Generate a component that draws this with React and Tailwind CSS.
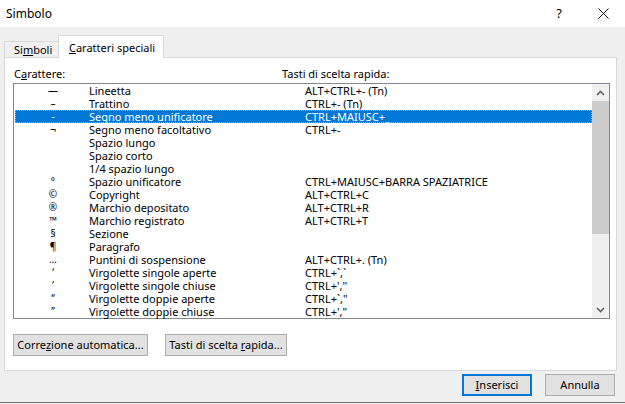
import React from "react";

const rows = [
  ["—", "Lineetta", "ALT+CTRL+- (Tn)"],
  ["–", "Trattino", "CTRL+- (Tn)"],
  ["-", "Segno meno unificatore", "CTRL+MAIUSC+_", true],
  ["¬", "Segno meno facoltativo", "CTRL+-"],
  ["", "Spazio lungo", ""],
  ["", "Spazio corto", ""],
  ["", "1/4  spazio lungo", ""],
  ["°", "Spazio unificatore", "CTRL+MAIUSC+BARRA SPAZIATRICE"],
  ["©", "Copyright", "ALT+CTRL+C"],
  ["®", "Marchio depositato", "ALT+CTRL+R"],
  ["™", "Marchio registrato", "ALT+CTRL+T"],
  ["§", "Sezione", ""],
  ["¶", "Paragrafo", ""],
  ["…", "Puntini di sospensione", "ALT+CTRL+. (Tn)"],
  ["‘", "Virgolette singole aperte", "CTRL+`,`"],
  ["’", "Virgolette singole chiuse", "CTRL+',''"],
  ["“", "Virgolette doppie aperte", "CTRL+`,\""],
  ["”", "Virgolette doppie chiuse", "CTRL+',\""],
];

function Btn({ children, className = "" }) {
  return (
    <div
      className={
        "h-[22px] flex items-center justify-center bg-[#e1e1e1] border border-[#adadad] text-[11px] text-black " +
        className
      }
    >
      <span className="whitespace-nowrap">{children}</span>
    </div>
  );
}

export default function App() {
  return (
    <div
      className="w-[625px] h-[404px] bg-[#f0f0f0] overflow-hidden flex flex-col text-black text-[11px]"
      style={{ fontFamily: '"Noto Sans", "Open Sans", sans-serif' }}
    >
      {/* Title bar */}
      <div className="h-[27px] bg-white flex items-center shrink-0">
        <span className="pl-[6px] text-[12px] leading-none whitespace-nowrap">Simbolo</span>
        <div className="ml-auto flex items-center">
          <span className="text-[13px] leading-none mr-[36px]">?</span>
          <svg width="11" height="11" viewBox="0 0 11 11" className="mr-[16px]">
            <path d="M0.5 0.5 L10.5 10.5 M10.5 0.5 L0.5 10.5" stroke="#111" strokeWidth="1" />
          </svg>
        </div>
      </div>

      {/* Tabs */}
      <div className="pl-[4px] pt-[7px] flex items-end h-[30px] shrink-0">
        <div className="h-[16px] w-[55px] border border-b-0 border-[#d9d9d9] bg-[#f0f0f0] flex items-center pl-[9px] leading-none">
          <span className="whitespace-nowrap">
            Si<span className="underline">m</span>boli
          </span>
        </div>
        <div className="h-[23px] w-[106px] border border-b-0 border-[#d9d9d9] bg-white flex items-center pl-[10px] leading-none relative z-10 -mb-px -ml-px">
          <span className="whitespace-nowrap">
            <span className="underline">C</span>aratteri speciali
          </span>
        </div>
      </div>

      {/* Panel */}
      <div className="ml-[4px] w-[613px] h-[314px] bg-white border border-[#d9d9d9] shrink-0 flex flex-col">
        <div className="h-[25px] flex items-end pb-[4px] leading-none">
          <span className="pl-[9px] w-[277px] whitespace-nowrap">
            C<span className="underline">a</span>rattere:
          </span>
          <span className="whitespace-nowrap">Tasti di scelta rapida:</span>
        </div>
        <div className="ml-[8px] w-[597px] h-[236px] border border-[#828790] flex">
          <div className="flex-1 flex flex-col">
            {rows.map(([sym, name, key, sel], i) => (
              <div
                key={i}
                className={
                  "h-[13px] flex items-center leading-[13px] whitespace-nowrap " +
                  (sel ? "bg-[#0078d7] text-white outline outline-1 outline-dotted outline-[#e0a050] -outline-offset-1 ml-px" : "")
                }
              >
                <span className={"w-[75px] pl-[3px] text-center text-[10px] " + (sel ? "-ml-px" : "")}>{sym}</span>
                <span className="w-[216px]">{name}</span>
                <span>{key}</span>
              </div>
            ))}
          </div>
          <div className="w-[17px] bg-[#f0f0f0] flex flex-col">
            <div className="h-[17px] flex items-center justify-center">
              <svg width="9" height="6" viewBox="0 0 9 6">
                <path d="M1 5 L4.5 1.5 L8 5" fill="none" stroke="#606060" strokeWidth="1.6" />
              </svg>
            </div>
            <div className="h-[133px] bg-[#cdcdcd]" />
            <div className="flex-1" />
            <div className="h-[17px] flex items-center justify-center">
              <svg width="9" height="6" viewBox="0 0 9 6">
                <path d="M1 1 L4.5 4.5 L8 1" fill="none" stroke="#606060" strokeWidth="1.6" />
              </svg>
            </div>
          </div>
        </div>
        <div className="mt-[15px] ml-[8px] flex gap-[17px]">
          <Btn className="w-[135px]">
            Corre<span className="underline">z</span>ione automatica...
          </Btn>
          <Btn className="w-[122px]">
            Tasti di scelta <span className="underline">r</span>apida...
          </Btn>
        </div>
      </div>

      {/* Footer */}
      <div className="flex justify-end gap-[13px] pr-[10px] pt-[3px] shrink-0">
        <div className="w-[70px] h-[22px] flex items-center justify-center bg-[#e1e1e1] border-2 border-[#0078d7]">
          <span className="whitespace-nowrap">
            <span className="underline">I</span>nserisci
          </span>
        </div>
        <Btn className="w-[70px]">Annulla</Btn>
      </div>

      {/* Underlying window edge */}
      <div className="mt-auto h-[2px] border-t border-[#707070] shrink-0" />
    </div>
  );
}
